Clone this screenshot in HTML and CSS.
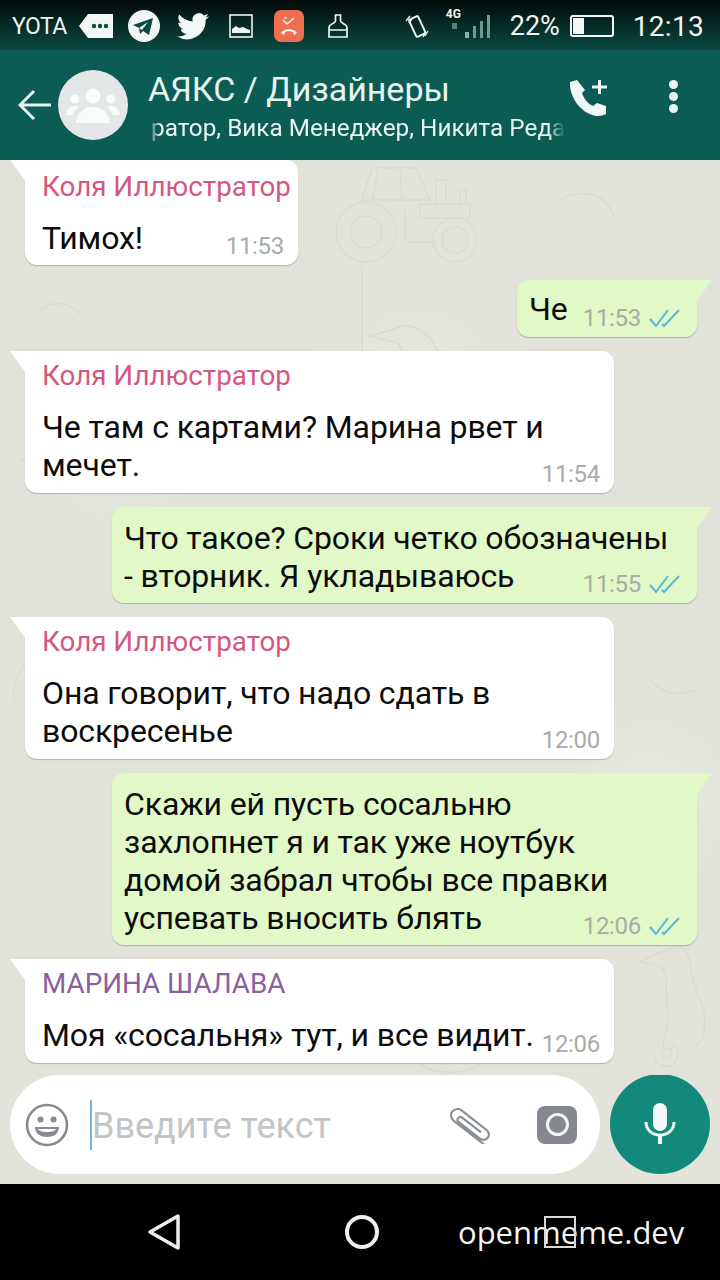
FILE: index.html
```html
<!DOCTYPE html>
<html lang="en">
<head>
  <meta charset="UTF-8" />
  <meta name="viewport" content="width=device-width, initial-scale=1.0" />
  <title>АЯКС / Дизайнеры</title>
  <link rel="stylesheet" href="styles.css">
</head>
<body>
  <div class="phone">
    <div class="status">
      <div class="status-left">
        <span class="carrier">YOTA</span>
        <svg class="ic" width="34" height="26" viewBox="0 0 34 26"><path d="M0 13 9 1h25v24H9z" fill="#f2f7f5"/><circle cx="15" cy="13" r="2.2" fill="#0b4a40"/><circle cx="21" cy="13" r="2.2" fill="#0b4a40"/><circle cx="27" cy="13" r="2.2" fill="#0b4a40"/></svg>
        <svg class="ic tg" width="32" height="32" viewBox="0 0 32 32"><circle cx="16" cy="16" r="16" fill="#f2f7f5"/><path d="M5 15 25 8l-4 17-6-4-3 3-1-6z" fill="#0b4a40"/><path d="m11 18 9-6-6 8z" fill="#f2f7f5"/></svg>
        <svg class="ic tw" width="32" height="27" viewBox="0 0 24 20"><path d="M24 2.4a10 10 0 0 1-2.8.8A5 5 0 0 0 23.300.5a10 10 0 0 1-3.100 1.200 4.900 4.900 0 0 0-8.400 4.500A14 14 0 0 1 1.700 1a4.900 4.900 0 0 0 1.500 6.600 5 5 0 0 1-2.200-.6c0 2.400 1.700 4.400 3.900 4.900a5 5 0 0 1-2.200.1 4.900 4.900 0 0 0 4.600 3.400A9.900 9.900 0 0 1 0 17.400 14 14 0 0 0 21.500 5c1-.7 1.800-1.600 2.500-2.600z" fill="#f2f7f5"/></svg>
        <svg class="ic pic" width="24" height="24" viewBox="0 0 24 24"><rect x="1" y="1" width="22" height="22" fill="none" stroke="#eef5f2" stroke-width="1.600"/><path d="M3 19v-4l4-3 3 2 4-1 4 2 3 1v3z" fill="#eef5f2"/></svg>
        <svg class="ic missed" width="30" height="32" viewBox="0 0 30 32"><rect width="30" height="32" rx="7" fill="#ed6f4f"/><path d="m9 10 4 4 7-6M13 8h-3" fill="none" stroke="#f8e4dc" stroke-width="1.600"/><path d="M7 23c3-5 13-5 16 0l-3 2-1-3c-2-1-6-1-8 0l-1 3z" fill="#fff"/></svg>
        <svg class="ic brush" width="22" height="24" viewBox="0 0 22 24"><path d="M8.500 1h5v6c0 2 6 3 6.500 6v3H2v-3c.5-3 6.500-4 6.500-6zM2 16v7h18v-7" fill="none" stroke="#eef5f2" stroke-width="1.700"/></svg>
      </div>
      <div class="status-right">
        <svg class="ic vib" width="24" height="26" viewBox="0 0 24 26"><rect x="7" y="4" width="10" height="19" rx="1.500" transform="rotate(-25 12 13)" fill="none" stroke="#eef5f2" stroke-width="2"/><path d="m1 8 4-5M4 10l3-4M20 23l3-5M18 24l2-3" stroke="#eef5f2" stroke-width="1.300"/></svg>
        <div class="signal">
          <span class="net">4G</span>
          <svg width="42" height="26" viewBox="0 0 42 26"><rect x="17" y="18" width="4" height="6" fill="#8fb0a9"/><rect x="25" y="12" width="3" height="12" fill="#6d9a91"/><rect x="32" y="7" width="3" height="17" fill="#6d9a91"/><rect x="39" y="1" width="3" height="23" fill="#6d9a91"/><path d="M4 9h5v6H4z" fill="#55867c"/></svg>
        </div>
        <span class="pct">22%</span>
        <div class="batt"><div class="batt-fill"></div></div>
        <span class="clock">12:13</span>
      </div>
    </div>

    <header class="appbar">
      <svg class="back" width="34" height="32" viewBox="0 0 34 32"><path d="M33 16H3M16 2 2 16l14 14" fill="none" stroke="#e6f2ef" stroke-width="3"/></svg>
      <div class="avatar">
        <svg width="54" height="36" viewBox="0 0 54 36"><g fill="#fafbfb"><circle cx="27" cy="9" r="7.500"/><circle cx="9" cy="12" r="4.500"/><circle cx="45" cy="12" r="4.500"/><path d="M10 36c0-10 8-16 17-16s17 6 17 16z"/><path d="M0 28c0-6 4-9 9-9 2 0 3 .5 4 1-3 2-5 5-6 8zM54 28c0-6-4-9-9-9-2 0-3 .5-4 1 3 2 5 5 6 8z"/></g></svg>
      </div>
      <div class="titles">
        <div class="title">АЯКС / Дизайнеры</div>
        <div class="members">ратор, Вика Менеджер, Никита Реда</div>
      </div>
      <svg class="addcall" width="40" height="38" viewBox="0 0 40 38"><path d="M8 1 1 3c-1 14 10 31 26 34 4 0 9-1 10-2V27l-9-3-4 3c-5-2-9-7-11-13l3-3z" fill="#f1f7f5"/><path d="M23 8h15M30.500 1v14" stroke="#f1f7f5" stroke-width="3"/></svg>
      <div class="dots"><i></i><i></i><i></i></div>
    </header>

    <main class="chat">
      <svg class="doodles" width="720" height="1024" viewBox="0 0 720 1024">
        <g fill="none" stroke="#d9dad1" stroke-width="1.500">
          <path d="M362 40 372 8h44l14 32M362 40h70M378 10l-6 30M400 10l2 30"/>
          <circle cx="366" cy="72" r="30"/><circle cx="366" cy="72" r="16"/>
          <path d="M405 82h32M420 44h50v14h-50zM436 44V20h10v24M460 44V30h6v14M405 50v30"/>
          <circle cx="455" cy="80" r="22"/><circle cx="455" cy="80" r="13"/>
          <path d="M362 108v90M392 170c20-10 30 0 40 10 6 12 10 22 12 34M392 170l-22 6 24 6c10 0 6 20 20 26"/>
          <path d="M640 802c10-6 22-12 30-12 6-10 18-2 20 14 2 16 6 24 8 32M640 802l20 4c10 6 4 30 8 44 4 14-8 30-4 40M698 836c10 16 8 44-2 50M654 896a12 12 0 1 0 18-12M662 894a5 5 0 1 0 2-5"/>
          <path d="M40 150c12-10 30-8 40 4M60 880c-16 0-26 10-28 24M150 850c10 10 30 10 40 0M420 905c20 10 40 10 60 0M130 25l12 30-30 12M560 40c24-14 50-4 54 20M640 350c18 4 30 18 30 36M650 520c12 14 30 16 44 10M620 690c20-10 40-4 50 12M30 500c-12 10-18 26-16 40M20 300c10 0 20 6 20 18"/>
        </g>
      </svg>
      <div class="msg in first">
        <div class="sender pink">Коля Иллюстратор</div>
        <div class="row"><div class="text">Тимох!</div><div class="meta"><span class="time">11:53</span></div></div>
      </div>
      <div class="msg out short">
        <div class="row"><div class="text">Че</div><div class="meta"><span class="time">11:53</span><svg class="ticks" width="31" height="20" viewBox="0 0 31 20"><path d="m1 11 6 7L19 2M13 16l2 2L30 2" fill="none" stroke="#5bb6d6" stroke-width="2"/></svg></div></div>
      </div>
      <div class="msg in wide">
        <div class="sender pink">Коля Иллюстратор</div>
        <div class="row"><div class="text">Че там с картами? Марина рвет и<br>мечет.</div><div class="meta"><span class="time">11:54</span></div></div>
      </div>
      <div class="msg out wide">
        <div class="row"><div class="text">Что такое? Сроки четко обозначены<br>- вторник. Я укладываюсь</div><div class="meta"><span class="time">11:55</span><svg class="ticks" width="31" height="20" viewBox="0 0 31 20"><path d="m1 11 6 7L19 2M13 16l2 2L30 2" fill="none" stroke="#5bb6d6" stroke-width="2"/></svg></div></div>
      </div>
      <div class="msg in wide">
        <div class="sender pink">Коля Иллюстратор</div>
        <div class="row"><div class="text">Она говорит, что надо сдать в<br>воскресенье</div><div class="meta"><span class="time">12:00</span></div></div>
      </div>
      <div class="msg out wide">
        <div class="row"><div class="text">Скажи ей пусть сосальню<br>захлопнет я и так уже ноутбук<br>домой забрал чтобы все правки<br>успевать вносить блять</div><div class="meta"><span class="time">12:06</span><svg class="ticks" width="31" height="20" viewBox="0 0 31 20"><path d="m1 11 6 7L19 2M13 16l2 2L30 2" fill="none" stroke="#5bb6d6" stroke-width="2"/></svg></div></div>
      </div>
      <div class="msg in wide">
        <div class="sender purple">МАРИНА ШАЛАВА</div>
        <div class="row"><div class="text">Моя «сосальня» тут, и все видит.</div><div class="meta"><span class="time">12:06</span></div></div>
      </div>
    </main>

    <div class="composer">
      <div class="inputbox">
        <svg class="smile" width="44" height="44" viewBox="0 0 44 44"><circle cx="22" cy="22" r="20" fill="#fff" stroke="#858b90" stroke-width="2.600"/><circle cx="15.500" cy="16.500" r="3" fill="#858b90"/><circle cx="28.500" cy="16.500" r="3" fill="#858b90"/><path d="M10 24h24c0 7-6 10-12 10s-12-3-12-10z" fill="#858b90"/><path d="M13 26h18c-1 2-4 3-9 3s-8-1-9-3z" fill="#fff"/></svg>
        <div class="caret"></div>
        <div class="placeholder">Введите текст</div>
        <svg class="clip" width="42" height="40" viewBox="0 0 42 40"><g transform="translate(6 2) rotate(38)"><path d="M46 13H7a6.500 6.500 0 0 1 0-13h32a5.500 5.500 0 0 1 0 11H12a2.800 2.800 0 0 1 0-5.600h24" fill="none" stroke="#8b9094" stroke-width="2.200"/></g></svg>
        <div class="cam"><div class="cam-lens"></div></div>
      </div>
      <div class="mic">
        <svg width="32" height="42" viewBox="0 0 32 42"><rect x="9" y="0" width="14" height="28" rx="7" fill="#f1f8f8"/><path d="M2 19c0 8 6 13 14 13s14-5 14-13" fill="none" stroke="#f1f8f8" stroke-width="3"/><path d="M16 32v9" stroke="#f1f8f8" stroke-width="4"/></svg>
      </div>
    </div>

    <nav class="navbar">
      <svg class="nav-back" width="34" height="38" viewBox="0 0 34 38"><path d="M31 3v32L3 19z" fill="none" stroke="#eee" stroke-width="3.500" stroke-linejoin="round"/></svg>
      <div class="nav-home"></div>
      <div class="mark">openmeme.dev<span class="mark-box"></span></div>
    </nav>
  </div>
</body>
</html>
```

FILE: styles.css
```css
* { box-sizing: border-box; }
html, body { margin: 0; padding: 0; }
body { width: 720px; height: 1280px; overflow: hidden; font-family: Roboto, "Noto Sans", sans-serif; }
.phone { width: 720px; height: 1280px; display: flex; flex-direction: column; background: #e2e3da; }
.ic { display: block; flex: none; }

/* status bar */
.status { height: 50px; flex: none; display: flex; justify-content: space-between; align-items: center; padding: 2px 16px 0 12px; background: linear-gradient(#020a09, #06201c 35%, #0a4a40); color: #eef5f2; }
.status-left, .status-right { display: flex; align-items: center; }
.carrier { font-size: 23px; width: 67px; letter-spacing: -0.5px; }
.tg { margin-left: 15px; }
.tw { margin-left: 17px; }
.pic { margin-left: 20px; }
.missed { margin-left: 21px; }
.brush { margin-left: 23px; }
.vib { margin-right: 17px; }
.signal { position: relative; width: 44px; height: 28px; margin-right: 20px; }
.signal svg { display: block; position: absolute; left: 2px; top: 2px; }
.net { position: absolute; left: 0; top: -5px; font-size: 12px; font-weight: 700; }
.pct { font-size: 27px; width: 60px; }
.batt { width: 44px; height: 22px; border: 2px solid #f2f7f5; border-radius: 3px; padding: 1px; }
.batt-fill { width: 11px; height: 100%; background: #f2f7f5; }
.clock { font-size: 28px; margin-left: 19px; letter-spacing: 0.3px; }

/* app bar */
.appbar { height: 110px; flex: none; display: flex; align-items: center; padding-left: 18px; background: #0b5d53; color: #e9f4f1; }
.back { flex: none; margin-right: 6px; }
.avatar { width: 70px; height: 70px; flex: none; border-radius: 50%; background: #e4e7e7; display: flex; align-items: center; justify-content: center; }
.titles { width: 417px; margin-left: 20px; }
.title { font-size: 34px; line-height: 38px; margin-top: 2px; white-space: nowrap; }
.members { font-size: 24.3px; line-height: 30px; margin-top: 5px; padding-left: 3px; white-space: nowrap; overflow: hidden; -webkit-mask-image: linear-gradient(90deg, transparent, #000 12px, #000 400px, transparent); }
.addcall { flex: none; margin: -14px 0 0 4px; }
.dots { display: flex; flex-direction: column; gap: 3px; margin: -18px 0 0 60px; }
.dots i { display: block; width: 9px; height: 9px; border-radius: 50%; background: #e9f4f1; }

/* chat */
.chat { position: relative; height: 915px; flex: none; display: flex; flex-direction: column; gap: 14px; overflow: hidden; background: radial-gradient(circle at 120px 300px, #e7e8e0, transparent 90px), radial-gradient(circle at 650px 640px, #e8e9e1, transparent 110px), radial-gradient(circle at 420px 220px, #e6e7df, transparent 120px), #e1e2d9; }
.doodles { position: absolute; left: 0; top: 0; }
.msg { position: relative; flex: none; border-radius: 12px; box-shadow: 0 1px 1px rgba(0, 0, 0, 0.22); color: #0c0c0c; }
.msg::before { content: ""; position: absolute; top: 0; width: 16px; height: 22px; }
.in { align-self: flex-start; margin-left: 25px; padding: 0 14px 0 17px; background: #fff; border-top-left-radius: 0; }
.in::before { left: -15px; background: #fff; clip-path: polygon(0 0, 100% 0, 100% 100%); }
.out { align-self: flex-end; margin-right: 23px; padding: 12px 17px 8px 12px; background: #e0f9c6; border-top-right-radius: 0; }
.out::before { right: -15px; background: #e0f9c6; clip-path: polygon(0 0, 100% 0, 0 100%); }
.first { width: 273px; height: 105px; padding-top: 2px; }
.short { width: 180px; height: 57px; margin-top: 1px; padding-top: 10px; }
.out.wide { width: 585px; }
.in.wide { width: 589px; }
.sender { font-size: 27.8px; line-height: 32px; padding-top: 9px; margin-bottom: 16px; white-space: nowrap; }
.pink { color: #d5577f; }
.purple { color: #8a5f9f; }
.row { padding-bottom: 9px; }
.out .row { padding-bottom: 0; }
.text { font-size: 32px; line-height: 38px; white-space: nowrap; letter-spacing: -0.12px; }
.meta { position: absolute; right: 14px; bottom: 4px; height: 30px; display: flex; align-items: center; gap: 8px; }
.out .meta { right: 17px; }
.time { font-size: 24px; color: #a9aca6; letter-spacing: -0.3px; }
.ticks { display: block; flex: none; }

/* composer */
.composer { height: 109px; flex: none; display: flex; align-items: flex-start; background: #e2e3da; padding: 0 10px; }
.inputbox { width: 590px; height: 99px; border-radius: 50px; background: #fff; display: flex; align-items: center; padding-left: 15px; }
.smile { flex: none; }
.caret { width: 2px; height: 50px; flex: none; margin-left: 21px; background: #6cb8cf; }
.placeholder { width: 340px; flex: none; font-size: 36px; color: #c3c5c5; padding-top: 2px; white-space: nowrap; }
.clip { flex: none; margin: -2px 0 0 18px; }
.cam { width: 40px; height: 38px; flex: none; margin-left: 45px; border-radius: 8px; background: #85888f; display: flex; align-items: center; justify-content: center; }
.cam-lens { width: 23px; height: 23px; border-radius: 50%; background: #85888f; border: 3px solid #f4f4f4; }
.mic { width: 100px; height: 100px; flex: none; margin-left: 10px; margin-top: -1px; border-radius: 50%; background: #12897a; display: flex; align-items: center; justify-content: center; }

/* bottom nav */
.navbar { height: 96px; flex: none; display: flex; align-items: center; padding-left: 147px; background: #000; }
.nav-back { display: block; flex: none; }
.nav-home { width: 34px; height: 34px; flex: none; margin-left: 164px; border: 4px solid #eee; border-radius: 50%; }
.mark { position: relative; margin-left: 79px; color: #f4f4f4; font-family: "Open Sans", Roboto, sans-serif; font-size: 31px; line-height: 40px; }
.mark-box { position: absolute; left: 86px; top: 4px; width: 32px; height: 32px; border: 2px solid #d8d8d8; }
```
